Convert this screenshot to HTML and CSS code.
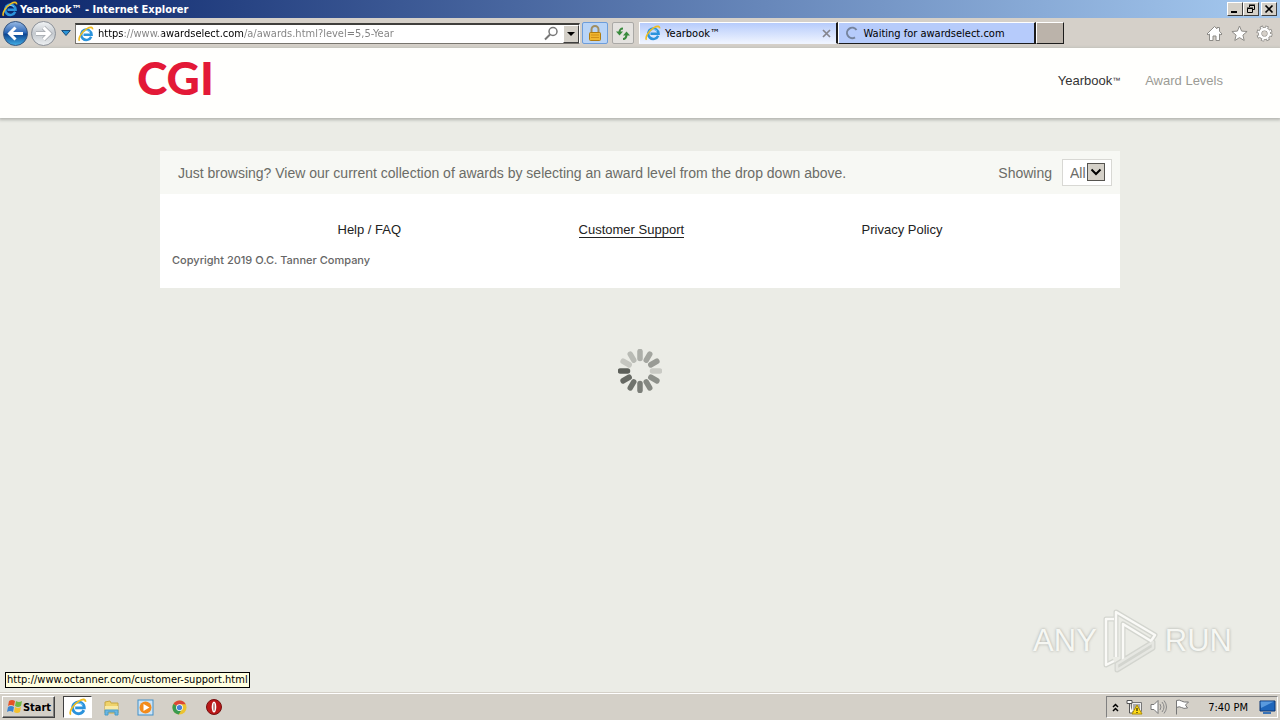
FILE: index.html
```html
<!DOCTYPE html>
<html lang="en">
<head>
<meta charset="utf-8">
<title>Yearbook™</title>
<link rel="stylesheet" href="styles.css">
</head>
<body>
<svg class="defs" aria-hidden="true">
  <symbol id="ie" viewBox="0 0 16 16">
    <path d="M13.200 10.800A5.200 5.200 0 1 1 13.600 8.700H5.500" fill="none" stroke="#2b93dc" stroke-width="2.500"/>
    <path d="M4.300 6.500A5 5 0 0 1 12 6" fill="none" stroke="#79cbf8" stroke-width="1"/>
    <path d="M1.600 14.800C-.5 12.500 4 5.500 9 2.600c3-1.700 5.800-1.900 5.600.8" fill="none" stroke="#f0bd21" stroke-width="1.600"/>
  </symbol>
</svg>
<header class="titlebar">
  <svg class="icon16"><use href="#ie"/></svg>
  <span class="window-title">Yearbook™ - Internet Explorer</span>
  <div class="window-buttons">
    <button class="winbtn" aria-label="Minimize"><svg width="10" height="10"><path d="M1 8h6" stroke="#000" stroke-width="2"/></svg></button>
    <button class="winbtn" aria-label="Restore"><svg width="10" height="10"><path d="M3.500 3V1.500h5v4H7M3 1h6M1.500 4.500h5v4h-5zM1 4h6" fill="none" stroke="#000"/></svg></button>
    <button class="winbtn close" aria-label="Close"><svg width="10" height="10"><path d="M1.500 1.500l7 7M8.500 1.500l-7 7" stroke="#000" stroke-width="1.700"/></svg></button>
  </div>
</header>
<div class="toolbar">
  <button class="plain" aria-label="Back"><svg width="27" height="27" viewBox="0 0 27 27"><defs><linearGradient id="bk" x2="0" y2="1"><stop stop-color="#9abbe5"/><stop offset=".48" stop-color="#2763b4"/><stop offset=".52" stop-color="#0c438f"/><stop offset="1" stop-color="#43b0e8"/></linearGradient></defs><circle cx="13.500" cy="13.500" r="12" fill="url(#bk)" stroke="#36557f"/><path d="M21 13.500H8M13.500 7.500l-6 6 6 6" fill="none" stroke="#fff" stroke-width="3"/></svg></button>
  <button class="plain" aria-label="Forward"><svg width="27" height="27" viewBox="0 0 27 27"><defs><linearGradient id="fw" x2="0" y2="1"><stop stop-color="#f2f4f6"/><stop offset=".5" stop-color="#c4c9ce"/><stop offset="1" stop-color="#eef1f3"/></linearGradient></defs><circle cx="13.500" cy="13.500" r="12" fill="url(#fw)" stroke="#8b9097"/><path d="M6 13.500h13M13.500 7.500l6 6-6 6" fill="none" stroke="#a5a9af" stroke-width="4.500"/><path d="M6 13.500h13M13.500 7.500l6 6-6 6" fill="none" stroke="#fff" stroke-width="3"/></svg></button>
  <button class="plain history" aria-label="Recent pages"><svg width="10" height="6"><path d="M.7.500h8.600L5 5.500z" fill="#2a93d5" stroke="#164a79"/></svg></button>
  <div class="address">
    <svg class="icon16"><use href="#ie"/></svg>
    <input class="url" aria-label="Address" value="https://www.awardselect.com/a/awards.html?level=5,5-Year">
    <button class="plain" aria-label="Search"><svg width="15" height="15"><circle cx="9" cy="5.500" r="4" fill="none" stroke="#777" stroke-width="1.500"/><path d="M6 8.500l-5 5" stroke="#777" stroke-width="2"/></svg></button>
    <button class="drop" aria-label="Show address history"><svg width="8" height="4"><path d="M0 0h8L4 4z"/></svg></button>
  </div>
  <button class="tool lock" aria-label="Security report"><svg width="14" height="17"><path d="M3.500 8V4.500a3.500 3.500 0 0 1 7 0V8" fill="none" stroke="#a18e61" stroke-width="2"/><rect x="1.500" y="7.500" width="11" height="8" rx="1" fill="#f0b62f" stroke="#b07b10"/><path d="M3 10h8M3 12.500h8" stroke="#d18f18"/></svg></button>
  <button class="tool" aria-label="Refresh"><svg width="16" height="15"><path d="M8 2.500C5 2.500 4.500 4 4.500 7" fill="none" stroke="#398a3d" stroke-width="2"/><path d="M1 5.500h7l-3.500 4z" fill="#398a3d"/><path d="M8 13c3 0 3.500-2 3.500-5" fill="none" stroke="#398a3d" stroke-width="2"/><path d="M8 9.500h7l-3.500-4z" fill="#398a3d"/></svg></button>
  <nav class="tabs" aria-label="Tabs">
    <div class="tab active"><svg class="icon16"><use href="#ie"/></svg><span class="tab-name">Yearbook™</span><button class="plain" aria-label="Close tab"><svg width="9" height="9"><path d="M1 1l7 7M8 1L1 8" stroke="#85858d" stroke-width="1.700"/></svg></button></div>
    <div class="tab"><svg class="icon16" viewBox="0 0 16 16"><path d="M12.500 5A5.200 5.200 0 1 0 11 12.300" fill="none" stroke="#75839d" stroke-width="2"/></svg><span class="tab-name">Waiting for awardselect.com</span></div>
    <button class="newtab" aria-label="New tab"></button>
  </nav>
  <div class="browser-tools">
    <button class="plain" aria-label="Home"><svg width="17" height="17" viewBox="0 0 17 17"><path d="M8.500 1.500l2.500 2.300V2.500h2.500v3.800L16 9l-1 1-1.500-1v6.500h-3.500v-4.500H7v4.500H3.500V9L2 10 1 9z" fill="#fff" stroke="#8d8b87"/></svg></button>
    <button class="plain" aria-label="Favorites"><svg width="17" height="17" viewBox="0 0 17 17"><path d="M8.500 1l2.100 5.100 5.500.4-4.200 3.600 1.300 5.400-4.700-2.900-4.700 2.900 1.300-5.400L.9 6.500l5.500-.4z" fill="#fff" stroke="#8d8b87"/></svg></button>
    <button class="plain" aria-label="Tools"><svg width="17" height="17" viewBox="0 0 17 17"><circle cx="8.500" cy="8.500" r="6.300" fill="none" stroke="#8d8b87" stroke-width="3.600" stroke-dasharray="2.900 2.050"/><circle cx="8.500" cy="8.500" r="4.500" fill="none" stroke="#8d8b87" stroke-width="4"/><circle cx="8.500" cy="8.500" r="6.300" fill="none" stroke="#fff" stroke-width="1.800" stroke-dasharray="1.800 3.150" stroke-dashoffset="-.5"/><circle cx="8.500" cy="8.500" r="4.400" fill="none" stroke="#fff" stroke-width="2.600"/></svg></button>
  </div>
</div>
<div class="viewport">
  <header class="site-header">
    <a class="logo" href="#">CGI</a>
    <nav class="site-nav"><a class="current" href="#">Yearbook<span class="tm">™</span></a><a href="#">Award Levels</a></nav>
  </header>
  <main class="content">
    <section class="card">
      <div class="browse">
        <p class="intro">Just browsing? View our current collection of awards by selecting an award level from the drop down above.</p>
        <label for="level">Showing</label>
        <div class="select-wrap"><select id="level"><option>All</option></select><svg class="arrow" width="18" height="18"><rect x=".5" y=".5" width="17" height="17" fill="#d4d0c8" stroke="#55534f"/><path d="M4.500 6.500L9 11l4.500-4.500" fill="none" stroke="#000" stroke-width="2"/></svg></div>
      </div>
      <footer class="card-footer">
        <nav class="links"><a href="#">Help / FAQ</a><a class="hovered" href="#">Customer Support</a><a href="#">Privacy Policy</a></nav>
        <p class="copyright">Copyright 2019 O.C. Tanner Company</p>
      </footer>
    </section>
    <svg class="spinner" viewBox="-22 -22 44 44" role="img" aria-label="Loading">
      <g stroke-width="5.500" stroke-linecap="round">
        <path d="M-12.500 0h-7" stroke="#5c5f59"/><path d="M-12.500 0h-7" transform="rotate(30)" stroke="#c5c6c0"/><path d="M-12.500 0h-7" transform="rotate(60)" stroke="#b9bbb5"/><path d="M-12.500 0h-7" transform="rotate(90)" stroke="#adafa9"/><path d="M-12.500 0h-7" transform="rotate(120)" stroke="#a3a59f"/><path d="M-12.500 0h-7" transform="rotate(150)" stroke="#999b95"/><path d="M-12.500 0h-7" transform="rotate(180)" stroke="#c9cac4"/><path d="M-12.500 0h-7" transform="rotate(210)" stroke="#8d908a"/><path d="M-12.500 0h-7" transform="rotate(240)" stroke="#858882"/><path d="M-12.500 0h-7" transform="rotate(270)" stroke="#7b7e78"/><path d="M-12.500 0h-7" transform="rotate(300)" stroke="#70736d"/><path d="M-12.500 0h-7" transform="rotate(330)" stroke="#666963"/>
      </g>
    </svg>
  </main>
  <div class="status">http://www.octanner.com/customer-support.html</div>
  <div class="watermark"><span>ANY</span><svg width="56" height="64" viewBox="0 0 56 64"><g fill="none" stroke-linejoin="round"><path d="M11 10H3v46l8-4M13 48V3l39 23-4 6-28-17v36M14 61l36-22v-6L14 55z" stroke="#d3d5cf" stroke-width="5"/><path d="M11 10H3v46l8-4M13 48V3l39 23-4 6-28-17v36" stroke="#fafaf7" stroke-width="2.500"/><path d="M14 61l36-22v-6L14 55z" stroke="#e6e7e2" stroke-width="2.500"/></g></svg><span>RUN</span></div>
</div>
<footer class="taskbar">
  <button class="start"><svg width="17" height="16" viewBox="0 0 17 16"><path d="M3 2q3-2 6 0L8 7Q5 5 2 7z" fill="#e65326"/><path d="M10 2q3 2 6 0l-1 5q-3 2-6 0z" fill="#70b943"/><path d="M2 8q3-2 6 0l-1 5q-3-2-6 0z" fill="#3b83d0"/><path d="M9 8q3 2 6 0l-1 5q-3 2-6 0z" fill="#f4c02d"/></svg>Start</button>
  <button class="task active" aria-label="Internet Explorer"><svg width="18" height="18"><use href="#ie"/></svg></button>
  <button class="task" aria-label="File Explorer"><svg width="17" height="17"><path d="M2 3l5-1 1 2h7v10H2z" fill="#efd36b" stroke="#c8a742"/><path d="M2 7h13v4H2z" fill="#faeaa4"/><path d="M2 16v-5h13v5h-3v-3H5v3z" fill="#6bb6e3" stroke="#489cc9"/></svg></button>
  <button class="task" aria-label="Media Player"><svg width="17" height="17"><rect x="1" y="1" width="15" height="15" fill="#cce4f6" stroke="#428fc8"/><circle cx="8.500" cy="8.500" r="6" fill="#f28b1c"/><path d="M6.500 5l6 3.500-6 3.500z" fill="#fff"/></svg></button>
  <button class="task" aria-label="Chrome"><svg width="15" height="15" viewBox="0 0 16 16"><circle cx="8" cy="8" r="7.500" fill="#ecc330"/><path d="M8 8L1.500 4.200A7.500 7.500 0 0 1 14.700 4.500H8z" fill="#dc4638"/><path d="M8 8L1.500 4.200A7.500 7.500 0 0 0 7.200 15.500L11 9z" fill="#3a9b50"/><circle cx="8" cy="8" r="3.600" fill="#fff"/><circle cx="8" cy="8" r="2.800" fill="#4781d8"/></svg></button>
  <button class="task" aria-label="Opera"><svg width="16" height="16"><circle cx="8" cy="8" r="7.500" fill="#ba1818" stroke="#751010"/><ellipse cx="8" cy="8" rx="2.300" ry="5.500" fill="#fff"/><ellipse cx="8" cy="8" rx="1" ry="4" fill="#bd8d88"/></svg></button>
  <div class="tray">
    <button class="plain" aria-label="Show hidden icons"><svg width="7" height="9"><path d="M1 4l2.500-2.500L6 4M1 8l2.500-2.500L6 8" fill="none" stroke="#000" stroke-width="1.500"/></svg></button>
    <svg width="17" height="16"><path d="M5.500 3.500h10v9h-10z" fill="#eee" stroke="#777"/><path d="M7 5h7v6H7z" fill="#aaa"/><path d="M1 1.500h5v3H1zM3.500 5v9H7" fill="#fff" stroke="#555"/><path d="M11 6l5 9H6z" fill="#ffdc18" stroke="#af8d00"/><path d="M11 9v3M11 13v1" stroke="#000"/></svg>
    <svg width="17" height="16"><path d="M1 5.500h3l4-4v13l-4-4H1z" fill="#fff" stroke="#777"/><path d="M10 5q2 3 0 6M12 3q4 5 0 10M14 1.500q5 6.500 0 13" fill="none" stroke="#888"/></svg>
    <svg width="17" height="16"><path d="M2.500 15.500V1.500q3-1 5 .5t7 1l-3 3 2 3q-4 1-6-.5t-5 0" fill="#fff" stroke="#777"/></svg>
    <time>7:40 PM</time>
    <svg width="17" height="15"><path d="M1 1h15v10H1z" fill="#1f66bb" stroke="#0b3473"/><path d="M1.500 1.500H15L2 8z" fill="#5a9ade"/><path d="M4 13h8" stroke="#3973b6" stroke-width="2"/></svg>
  </div>
</footer>
</body>
</html>
```
FILE: styles.css
```css
* { box-sizing: border-box; }
body { margin: 0; min-height: 100vh; display: flex; flex-direction: column; background: #ebece6; font-family: "DejaVu Sans Condensed", "Noto Sans", sans-serif; font-size: 11px; color: #000; }
button, input, select { font: inherit; margin: 0; }
button { padding: 0; border: 0; display: flex; align-items: center; justify-content: center; flex: none; }
svg { display: block; flex: none; }
a { color: inherit; text-decoration: none; }
p { margin: 0; }
.defs { position: absolute; width: 0; height: 0; }
.icon16 { width: 16px; height: 16px; }
.plain { background: none; }

.titlebar { height: 18px; display: flex; align-items: center; gap: 2px; padding: 0 3px 0 2px; background: linear-gradient(90deg, #0a246a, #a6caf0); }
.window-title { flex: 1; color: #fff; font-weight: bold; }
.window-buttons { display: flex; }
.winbtn { width: 16px; height: 14px; background: #d4d0c8; border: 1px solid; border-color: #fff #404040 #404040 #fff; }
.close { margin-left: 2px; }

.toolbar { height: 30px; display: flex; align-items: center; padding: 0 7px 0 2px; background: #d5d0c9; gap: 1px; }
.history { width: 16px; }
.address { flex: 1; height: 21px; display: flex; align-items: center; gap: 4px; padding: 0 0 0 2px; background: #fff; border: 1px solid #77746e; border-top: 2px solid #403f3c; border-right-color: #fff; }
.url { flex: 1; min-width: 0; border: 0; padding: 0; outline: 0; color: transparent; background: linear-gradient(90deg, #000 26px, #808080 26px 64px, #000 64px 146px, #808080 146px); background-clip: text; -webkit-background-clip: text; }
.drop { width: 16px; height: 18px; background: #d4d0c8; border: 1px solid; border-color: #fff #404040 #404040 #fff; }
.tool { width: 22px; height: 22px; margin-left: 3px; background: #e4e2df; border: 1px solid #aaa9a6; border-radius: 2px; }
.lock { width: 26px; margin-left: 1px; background: #b9d4f6; border-color: #6d9dda; }
.tabs { width: 425px; height: 22px; display: flex; margin: 0 141px 0 4px; }
.tab { flex: 1; display: flex; align-items: center; gap: 4px; padding: 0 5px; background: #b6cbfb; border: 1px solid; border-color: #fff #1c1c1c #1c1c1c #fff; border-right-width: 2px; }
.tab.active { background: linear-gradient(#b6cbfb, #eff4ff); border-bottom-color: #eff4ff; }
.tab-name { flex: 1; white-space: nowrap; }
.newtab { width: 28px; background: #bbb3aa; border: 1px solid; border-color: #fff #1c1c1c #1c1c1c #fff; }
.browser-tools { display: flex; gap: 8px; }

.viewport { flex: 1; position: relative; display: flex; flex-direction: column; font-family: "Liberation Sans", Arial, sans-serif; }
.site-header { height: 70px; display: flex; justify-content: space-between; padding: 0 57px 0 137px; background: #fffffd; box-shadow: 0 1px 3px 1px #b4b5b0; }
.logo { color: #e31937; font: 900 46px/60px Lato, sans-serif; }
.site-nav { display: flex; gap: 25px; font-size: 13px; line-height: 66px; color: #9b9b95; }
.current { color: #333; }
.tm { font-size: 8px; vertical-align: 2px; line-height: 1; }
.content { flex: 1; display: flex; flex-direction: column; align-items: center; padding: 33px 20px; }
.card { width: 100%; max-width: 960px; background: #fff; }
.browse { min-height: 43px; display: flex; align-items: center; padding: 0 8px 0 18px; background: #f7f8f4; color: #6b6c67; font-size: 14px; }
.intro { flex: 1; }
.select-wrap { position: relative; margin-left: 10px; }
select { display: block; appearance: none; width: 50px; height: 27px; padding: 0 0 0 7px; border: 1px solid #d8d8d4; border-radius: 0; background: #fff; color: #6b6c67; }
.arrow { position: absolute; right: 7px; top: 4px; pointer-events: none; }
.card-footer { padding: 27px 12px 20px; font-family: Inter, sans-serif; }
.links { display: flex; justify-content: space-evenly; margin: 0 -12px 14px; font: 13px/17px "Liberation Sans", Arial, sans-serif; color: #222; }
.hovered { box-shadow: 0 -1px #222 inset; }
.copyright { font-size: 11px; font-weight: 500; line-height: 16px; color: #666; }
.spinner { width: 44px; height: 44px; margin-top: 61px; }
.status { position: absolute; left: 5px; bottom: 5px; padding: 0 1px; line-height: 14px; border: 1px solid #000; background: #ffffe1; font-family: "DejaVu Sans Condensed", sans-serif; }
.watermark { position: absolute; right: 48px; bottom: 20px; display: flex; align-items: center; gap: 6px; color: #f6f7f3; font: 31px/64px "Liberation Sans Narrow", "Liberation Sans", sans-serif; text-shadow: 0 0 3px #a4a6a0; }

.taskbar { height: 27px; display: flex; align-items: center; gap: 5px; padding: 1px 2px 1px; background: #d4d0c8; border-top: 1px solid #fff; box-shadow: 0 -1px #d4d0c8; }
.start { width: 53px; height: 22px; font-weight: bold; background: #d4d0c8; border: 1px solid; border-color: #fff #404040 #404040 #fff; box-shadow: -1px -1px #808080 inset; }
.task { width: 29px; height: 22px; background: none; }
.task.active { margin-left: 3px; background: #fff; border: 1px solid; border-color: #404040 #fff #fff #404040; }
.tray { margin-left: auto; height: 22px; display: flex; align-items: center; gap: 7px; padding: 0 1px 0 5px; border: 1px solid; border-color: #808080 #fff #fff #808080; }
.tray time { margin: 0 4px 0 10px; }
```
